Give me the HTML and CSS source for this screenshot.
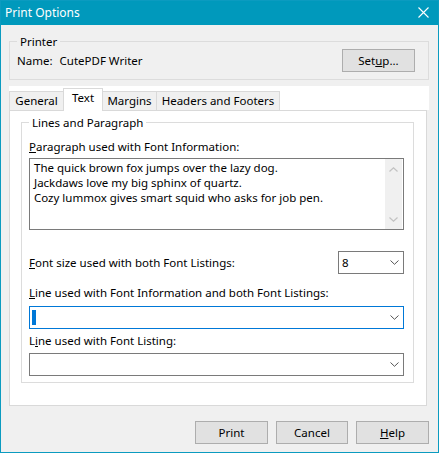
FILE: index.html
```html
<!DOCTYPE html>
<html>
<head>
<meta charset="utf-8">
<title>Print Options</title>
<link rel="stylesheet" href="styles.css">
</head>
<body>
<div class="window">
  <div class="titlebar">
    <span class="title">Print Options</span>
    <svg class="close" width="11" height="11" viewBox="0 0 11 11"><path d="M0.5 0.5L10.5 10.5M10.5 0.5L0.5 10.5" stroke="#fff" stroke-width="1.1" fill="none"/></svg>
  </div>
  <div class="content">
    <fieldset class="group printer">
      <legend>Printer</legend>
      <div class="printer-row">
        <span class="name"><span>Name:</span><span class="pname">CutePDF Writer</span></span>
        <button class="btn">Set<u>u</u>p...</button>
      </div>
    </fieldset>
    <div class="tabctl">
      <div class="tabs">
        <div class="tab t-general">General</div>
        <div class="tab t-text active">Text</div>
        <div class="tab t-margins">Margins</div>
        <div class="tab t-headers">Headers and Footers</div>
      </div>
      <div class="panel">
        <fieldset class="group lines">
          <legend>Lines and Paragraph</legend>
          <div class="label first"><u>P</u>aragraph used with Font Information:</div>
          <div class="memo">
            <div class="memo-text">
              <div>The quick brown fox jumps over the lazy dog.</div>
              <div>Jackdaws love my big sphinx of quartz.</div>
              <div>Cozy lummox gives smart squid who asks for job pen.</div>
            </div>
            <div class="vscroll">
              <svg width="9" height="5" viewBox="0 0 9 5"><path d="M0.5 4.5L4.5 0.8L8.5 4.5" stroke="#c2c2c2" stroke-width="1.2" fill="none"/></svg>
              <svg width="9" height="5" viewBox="0 0 9 5"><path d="M0.5 0.5L4.5 4.2L8.5 0.5" stroke="#c2c2c2" stroke-width="1.2" fill="none"/></svg>
            </div>
          </div>
          <div class="size-row">
            <span><u>F</u>ont size used with both Font Listings:</span>
            <div class="combo small"><span class="val">8</span><svg width="9" height="5" viewBox="0 0 9 5"><path d="M0.5 0.5L4.5 4.3L8.5 0.5" stroke="#555" stroke-width="1" fill="none"/></svg></div>
          </div>
          <div class="label l2"><u>L</u>ine used with Font Information and both Font Listings:</div>
          <div class="combo focus"><span class="sel"></span><svg width="9" height="5" viewBox="0 0 9 5"><path d="M0.5 0.5L4.5 4.3L8.5 0.5" stroke="#555" stroke-width="1" fill="none"/></svg></div>
          <div class="label l3">L<u>i</u>ne used with Font Listing:</div>
          <div class="combo c3"><span></span><svg width="9" height="5" viewBox="0 0 9 5"><path d="M0.5 0.5L4.5 4.3L8.5 0.5" stroke="#555" stroke-width="1" fill="none"/></svg></div>
        </fieldset>
      </div>
    </div>
    <div class="buttons">
      <button class="btn">Print</button>
      <button class="btn">Cancel</button>
      <button class="btn"><u>H</u>elp</button>
    </div>
  </div>
</div>
</body>
</html>
```
FILE: styles.css
```css
* { box-sizing: border-box; }
html, body { margin: 0; padding: 0; background: #f0f0f0; }
body {
  font-family: "Noto Sans", "DejaVu Sans", sans-serif;
  font-size: 11.5px;
  line-height: 15px;
  color: #000;
}
.window {
  width: 439px;
  height: 453px;
  border: 1px solid #0b9bc0;
  background: #f0f0f0;
  display: flex;
  flex-direction: column;
}
.titlebar {
  height: 24px;
  background: #0099bc;
  color: #fff;
  display: flex;
  align-items: center;
  justify-content: space-between;
  padding: 0 9px 0 4px;
  font-size: 12px;
}
.title { position: relative; top: -1px; }
.close { display: block; margin-top: -1px; }
.content { display: flex; flex-direction: column; }

fieldset.group {
  border: 1px solid #dcdcdc;
  min-width: 0;
}
fieldset.group legend {
  padding: 0 3px;
  line-height: 15px;
}
fieldset.printer {
  margin: 9px 9px 0 8px;
  padding: 0 13px 7px 7px;
}
.printer-row {
  height: 23px;
  display: flex;
  align-items: center;
  justify-content: space-between;
}
.pname { margin-left: 7px; }
.btn {
  width: 73px;
  height: 23px;
  background: #e1e1e1;
  border: 1px solid #adadad;
  font: inherit;
  color: #000;
  padding: 0;
  margin: 0;
}
.tabctl {
  margin: 6px 0 0 8px;
  display: flex;
  flex-direction: column;
}
.tabs {
  width: 420px;
  height: 24px;
  background: #fff;
  display: flex;
  align-items: flex-end;
}
.tab {
  height: 19px;
  border: 1px solid #d9d9d9;
  border-bottom: none;
  background: #f0f0f0;
  text-align: center;
  line-height: 17px;
  margin-left: -1px;
}
.t-general { width: 55px; margin-left: 0; }
.t-text { width: 40px; }
.t-margins { width: 55px; }
.t-headers { width: 124px; }
.tab.active {
  height: 23px;
  background: #fff;
  margin-bottom: -1px;
  position: relative;
  z-index: 1;
  line-height: 17px;
}
.panel {
  width: 418px;
  height: 296px;
  background: #fff;
  border: 1px solid #d9d9d9;
  padding-top: 4px;
}
fieldset.lines {
  margin: 0 12px 0 11px;
  padding: 0 9px 6px 7px;
}
.label.first { margin-top: 9px; margin-bottom: 4px; }
.memo {
  height: 72px;
  border: 1px solid #7a7a7a;
  display: flex;
  padding-right: 1px;
}
.memo-text {
  flex: 1;
  padding: 1px 0 0 4px;
  line-height: 15px;
}
.vscroll {
  width: 17px;
  background: #f0f0f0;
  display: flex;
  flex-direction: column;
  justify-content: space-between;
  align-items: center;
  padding: 8px 0 7px;
}
.vscroll svg { display: block; }
.size-row {
  margin-top: 21px;
  height: 23px;
  display: flex;
  align-items: center;
  justify-content: space-between;
}
.combo {
  height: 23px;
  border: 1px solid #7a7a7a;
  display: flex;
  align-items: center;
  justify-content: space-between;
  padding: 0 4px 0 2px;
}
.combo svg { display: block; }
.combo.small { width: 66px; }
.combo .val { margin-left: 1px; }
.combo.focus { border-color: #0078d7; margin-top: 6px; }
.sel {
  width: 4px;
  height: 15px;
  background: #0078d7;
}
.label.l2 { margin-top: 11px; }
.label.l3 { margin-top: 4px; }
.combo.c3 { margin-top: 5px; }
.buttons {
  margin: 15px 9px 0 0;
  display: flex;
  justify-content: flex-end;
  gap: 8px;
}
.buttons .btn:nth-child(2) { width: 72px; }
```
